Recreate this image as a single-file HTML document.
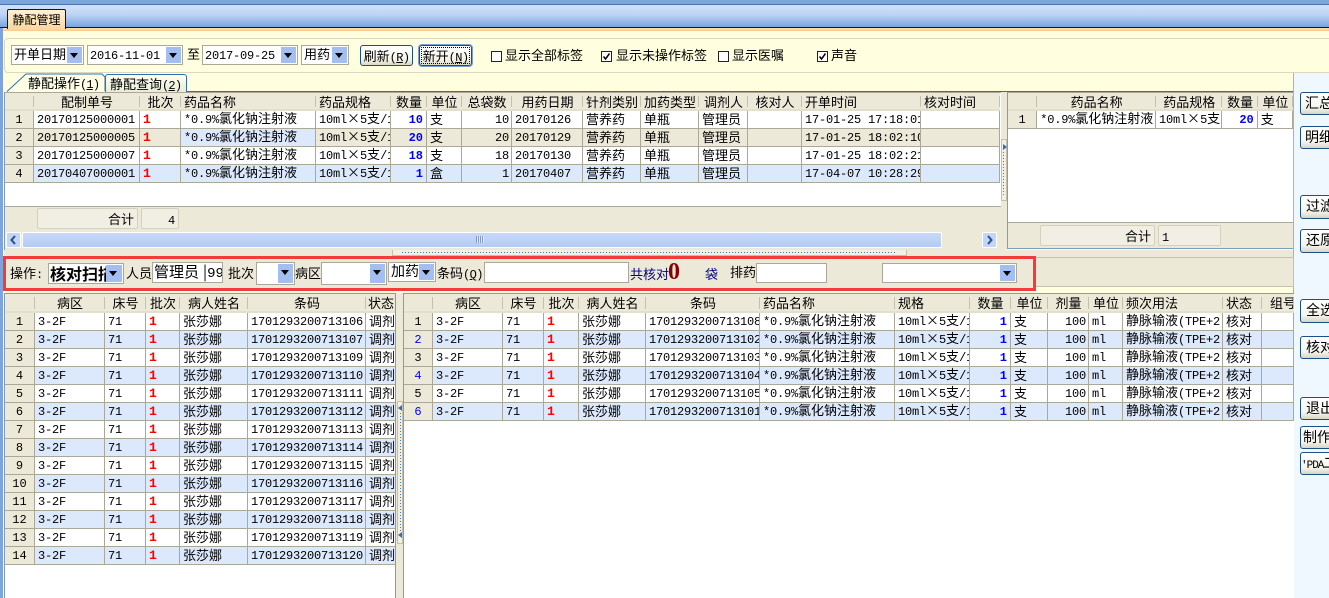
<!DOCTYPE html>
<html lang="zh"><head><meta charset="utf-8"><title>静配管理</title>
<style>
*{box-sizing:border-box}
html,body{margin:0;padding:0}
body{width:1329px;height:598px;overflow:hidden}
#p{position:relative;width:1329px;height:598px;overflow:hidden;background:#ffffe0;font:13px/18px "WenQuanYi Zen Hei","Noto Sans CJK SC",sans-serif;color:#000}
.a{position:absolute}
i{font-style:normal;font-family:"Liberation Mono",monospace;font-size:12px;letter-spacing:-.2px;line-height:1}
table{border-collapse:separate;border-spacing:0;table-layout:fixed;position:absolute;left:0;top:0}
td,th{height:18px;padding:0 0 2px 3px;white-space:nowrap;overflow:hidden;font-weight:normal;border-right:1px solid #aca899;border-bottom:1px solid #aca899;line-height:14px}
th{background:#ece9d8;border:0;position:relative;height:18px;box-shadow:inset 0 -2px 0 #e2dfcd;padding:0 3px}
th:after{content:"";position:absolute;right:0;top:3px;bottom:4px;width:1px;background:#c4c0ac}
th.l{text-align:left}
.t2 th{height:19px;padding-bottom:2px}
td.h{background:#ece9d8;text-align:center;padding:0;font-family:"Liberation Mono",monospace;font-size:12px}
td.hb{color:#00f}
td.n{font-family:"Liberation Mono",monospace;font-size:12px;letter-spacing:-.2px;padding:0 0 0 3px}
td.r{text-align:right;padding:0 2px 0 0;font-family:"Liberation Mono",monospace;font-size:12px;letter-spacing:-.2px}
td.q{text-align:right;padding:0 3px 0 0;color:#00f;font:bold 12px/14px "Liberation Mono",monospace}
td.b{color:#f00;font:bold 13px/14px "Liberation Mono",monospace;padding:0 0 0 3px}
tr.e td{background:#dce8fb}
tr.e td.h{background:#ece9d8}
tr.o td{background:#fff}
tr.o td.h{background:#ece9d8}
tr.s td{background:#ece9d8}
tr.s td.m{background:#dce8fb}
.g{overflow:hidden;background:#fff}
.c{position:absolute;background:#fff;border:1px solid #aca899;white-space:nowrap;overflow:hidden;padding-left:2px;line-height:16px}
.ar{position:absolute;right:1px;top:1px;bottom:1px;width:15px;background:#a3bff2}
.ar:after{content:"";position:absolute;left:3px;top:6px;border:4px solid transparent;border-top:5px solid #000;border-bottom:0}
.btn{position:absolute;background:linear-gradient(#fff,#f5f4ea 70%,#dcd8c4);border:1px solid #1d4f87;border-radius:3px;text-align:center;line-height:19px;overflow:hidden;white-space:nowrap}
.rb{position:absolute;left:1300px;width:40px;background:linear-gradient(#fff,#f6f5ee 70%,#d8d5c3);border:1px solid #1d4f87;border-radius:3px;padding-left:4px;font-size:14px;line-height:20px;white-space:nowrap;overflow:hidden}
.cb{position:absolute;width:11px;height:11px;background:#fff;border:1px solid #222;overflow:hidden}
.cb svg{position:absolute;left:0;top:0}
.fc{position:absolute;background:#f1efe4;border:1px solid #d4d0bd;border-radius:2px;height:21px;line-height:19px}
</style></head><body><div id="p">

<!-- title band -->
<div class="a" style="left:0;top:0;width:1329px;height:5px;background:#7ea4dd"></div>
<div class="a" style="left:0;top:4px;width:1329px;height:1px;background:#4a74ae"></div>
<div class="a" style="left:0;top:5px;width:1329px;height:22px;background:linear-gradient(#d3e3fa,#bcd3f4 45%,#7aa3de)"></div>
<div class="a" style="left:0;top:27px;width:1329px;height:1px;background:#00126f"></div>
<div class="a" style="left:0;top:28px;width:1329px;height:3px;background:linear-gradient(#ffe0a8,#f8c890)"></div>
<div class="a" style="left:7px;top:9px;width:59px;height:20px;background:linear-gradient(#fff2d4,#fbd79f);border:1px solid #00126f;border-bottom:0;border-radius:2px 2px 0 0;text-align:center;line-height:20px;font-size:12px">静配管理</div>
<div class="a" style="left:0;top:28px;width:3px;height:570px;background:#7ea4dd"></div>

<!-- toolbar -->
<div class="a" style="left:4px;top:38px;width:1340px;height:35px;border:1px solid #dad8c4;border-radius:4px"></div>
<div class="c" style="left:11px;top:45px;width:73px;height:20px">开单日期<div class="ar"></div></div>
<div class="c" style="left:87px;top:45px;width:96px;height:20px"><i>2016-11-01</i><div class="ar"></div></div>
<div class="a" style="left:187px;top:45px">至</div>
<div class="c" style="left:202px;top:45px;width:96px;height:20px"><i>2017-09-25</i><div class="ar"></div></div>
<div class="c" style="left:301px;top:45px;width:48px;height:20px">用药<div class="ar"></div></div>
<div class="btn" style="left:360px;top:45px;width:53px;height:21px">刷新<i style="letter-spacing:-.6px">(<u>R</u>)</i></div>
<div class="btn" style="left:419px;top:45px;width:53px;height:21px;outline:1px dotted #000;outline-offset:-3px;box-shadow:0 0 0 1px #7aa0d8">新开<i style="letter-spacing:-.6px">(<u>N</u>)</i></div>
<div class="cb" style="left:491px;top:51px"></div><div class="a" style="left:505px;top:46px">显示全部标签</div>
<div class="cb" style="left:601px;top:51px"><svg width="9" height="9"><path d="M1.5 4.5 L3.5 7 L7.5 1.5" fill="none" stroke="#000" stroke-width="1.5"/></svg></div><div class="a" style="left:616px;top:46px">显示未操作标签</div>
<div class="cb" style="left:718px;top:51px"></div><div class="a" style="left:732px;top:46px">显示医嘱</div>
<div class="cb" style="left:817px;top:51px"><svg width="9" height="9"><path d="M1.5 4.5 L3.5 7 L7.5 1.5" fill="none" stroke="#000" stroke-width="1.5"/></svg></div><div class="a" style="left:831px;top:46px">声音</div>

<!-- tabs -->
<svg class="a" style="left:4px;top:73px" width="110" height="20"><path d="M3 18.5 L22 1 H98 L101 4 V18" fill="#ffffe6" stroke="#2f6fae"/></svg>
<div class="a" style="left:28px;top:74px;line-height:18px">静配操作<i style="letter-spacing:-.8px">(<u>1</u>)</i></div>
<div class="a" style="left:105px;top:74px;width:82px;height:18px;background:linear-gradient(#fffff0,#e8ecd8);border:1px solid #2f6fae;border-bottom:0;border-radius:3px 3px 0 0;padding-left:4px;line-height:17px">静配查询<i style="letter-spacing:-.8px">(<u>2</u>)</i></div>
<div class="a" style="left:187px;top:91px;width:1107px;height:1px;background:#2f6fae"></div>

<!-- right column -->
<div class="a" style="left:1293px;top:73px;width:36px;height:525px;background:#eff7ff;border-left:1px solid #9fb4cf"></div>
<div class="rb" style="top:92px;height:23px">汇总</div>
<div class="rb" style="top:126px;height:23px">明细</div>
<div class="rb" style="top:195px;height:24px;padding-left:5px">过滤</div>
<div class="rb" style="top:229px;height:24px;padding-left:5px">还原</div>
<div class="rb" style="top:299px;height:24px;padding-left:5px">全选</div>
<div class="rb" style="top:336px;height:23px;padding-left:5px">核对</div>
<div class="rb" style="top:397px;height:23px;padding-left:5px">退出</div>
<div class="rb" style="top:426px;height:23px;padding-left:2px">制作</div>
<div class="rb" style="top:452px;height:23px;padding-left:0"><i style="font-size:11px;letter-spacing:-1px">'PDA</i>二</div>

<!-- top grid -->
<div class="a g" style="left:4px;top:92px;width:997px;height:158px;border-left:1px solid #7f9db9;border-top:1px solid #aca899">
<table style="width:995px">
<colgroup><col style="width:29px"><col style="width:106px"><col style="width:41px"><col style="width:135px"><col style="width:75px"><col style="width:36px"><col style="width:35px"><col style="width:50px"><col style="width:71px"><col style="width:58px"><col style="width:58px"><col style="width:49px"><col style="width:54px"><col style="width:119px"><col style="width:79px"></colgroup>
<tr><th></th><th>配制单号</th><th>批次</th><th class="l">药品名称</th><th class="l">药品规格</th><th>数量</th><th>单位</th><th>总袋数</th><th>用药日期</th><th>针剂类别</th><th>加药类型</th><th>调剂人</th><th>核对人</th><th class="l">开单时间</th><th class="l">核对时间</th></tr>
<tr class="o"><td class="h">1</td><td class="n">20170125000001</td><td class="b">1</td><td class="m"><i>*0.9%</i>氯化钠注射液</td><td><i>10ml</i>×<i>5</i>支<i>/1</i></td><td class="q">10</td><td>支</td><td class="r">10</td><td class="n">20170126</td><td>营养药</td><td>单瓶</td><td>管理员</td><td></td><td class="n">17-01-25 17:18:01</td><td></td></tr>
<tr class="s"><td class="h">2</td><td class="n">20170125000005</td><td class="b">1</td><td class="m"><i>*0.9%</i>氯化钠注射液</td><td><i>10ml</i>×<i>5</i>支<i>/1</i></td><td class="q">20</td><td>支</td><td class="r">20</td><td class="n">20170129</td><td>营养药</td><td>单瓶</td><td>管理员</td><td></td><td class="n">17-01-25 18:02:10</td><td></td></tr>
<tr class="o"><td class="h">3</td><td class="n">20170125000007</td><td class="b">1</td><td class="m"><i>*0.9%</i>氯化钠注射液</td><td><i>10ml</i>×<i>5</i>支<i>/1</i></td><td class="q">18</td><td>支</td><td class="r">18</td><td class="n">20170130</td><td>营养药</td><td>单瓶</td><td>管理员</td><td></td><td class="n">17-01-25 18:02:21</td><td></td></tr>
<tr class="e"><td class="h">4</td><td class="n">20170407000001</td><td class="b">1</td><td class="m"><i>*0.9%</i>氯化钠注射液</td><td><i>10ml</i>×<i>5</i>支<i>/1</i></td><td class="q">1</td><td>盒</td><td class="r">1</td><td class="n">20170407</td><td>营养药</td><td>单瓶</td><td>管理员</td><td></td><td class="n">17-04-07 10:28:29</td><td></td></tr>
</table>
<div class="a" style="left:0;top:113px;width:997px;height:44px;background:#ece9d8;border-top:1px solid #aca899"></div>
<div class="fc" style="left:32px;top:115px;width:101px;text-align:right;padding-right:3px">合计</div>
<div class="fc" style="left:136px;top:115px;width:38px;text-align:right;padding-right:3px"><i>4</i></div>
<div class="a" style="left:1px;top:139px;width:15px;height:16px;background:#c4d6f6;border:1px solid #fff"><svg width="13" height="14" style="position:absolute;left:0;top:0"><path d="M8 3 L4.5 7 L8 11" fill="none" stroke="#2a4f8f" stroke-width="2"/></svg></div>
<div class="a" style="left:17px;top:139px;width:920px;height:16px;background:linear-gradient(#c9d9f9,#b4caf4);border:1px solid #fff;border-radius:2px"></div>
<div class="a" style="left:471px;top:143px;width:8px;height:7px;background:repeating-linear-gradient(90deg,#7f9bd0 0 1px,#e4ecfb 1px 2px)"></div>
<div class="a" style="left:977px;top:139px;width:15px;height:16px;background:#c4d6f6;border:1px solid #fff"><svg width="13" height="14" style="position:absolute;left:0;top:0"><path d="M5 3 L8.5 7 L5 11" fill="none" stroke="#2a4f8f" stroke-width="2"/></svg></div>
</div>

<!-- vertical splitter top -->
<div class="a" style="left:1001px;top:92px;width:6px;height:158px;background:#ece9d8"></div>
<div class="a" style="left:1001px;top:139px;width:6px;height:62px;background:#f2f0e4;border:1px solid #c4c0ac"></div>
<div class="a" style="left:1003px;top:144px;width:0;height:0;border:3px solid transparent;border-left:4px solid #2a6fc8"></div>
<div class="a" style="left:1003px;top:152px;width:1px;height:44px;background:repeating-linear-gradient(#3a78c8 0 1px,transparent 1px 3px)"></div>

<!-- top right grid -->
<div class="a g" style="left:1007px;top:92px;width:286px;height:157px;border-top:1px solid #aca899;border-left:1px solid #7f9db9">
<table style="width:285px">
<colgroup><col style="width:29px"><col style="width:118px"><col style="width:66px"><col style="width:35px"><col style="width:35px"></colgroup>
<tr><th></th><th>药品名称</th><th>药品规格</th><th>数量</th><th>单位</th></tr>
<tr class="o"><td class="h">1</td><td><i>*0.9%</i>氯化钠注射液</td><td><i>10ml</i>×<i>5</i>支</td><td class="q">20</td><td>支</td></tr>
</table>
<div class="a" style="left:0;top:129px;width:285px;height:28px;background:#ece9d8;border-top:1px solid #aca899"></div>
<div class="fc" style="left:32px;top:132px;width:115px;text-align:right;padding-right:3px">合计</div>
<div class="fc" style="left:150px;top:132px;width:63px;padding-left:3px"><i>1</i></div>
</div>
<div class="a" style="left:1007px;top:248px;width:286px;height:1px;background:#7f9db9"></div>

<!-- horizontal splitter -->
<div class="a" style="left:4px;top:250px;width:1289px;height:7px;background:#ece9d8"></div>
<div class="a" style="left:392px;top:250px;width:515px;height:6px;background:#f2f0e4;border:1px solid #c4c0ac;border-top:0"></div>
<div class="a" style="left:402px;top:252px;width:495px;height:1px;background:repeating-linear-gradient(90deg,#3a78c8 0 1px,transparent 1px 3px)"></div>

<!-- operation panel -->
<div class="a" style="left:4px;top:257px;width:1290px;height:30px;background:#ece9d8;border:1px solid #c4c0ac"></div>
<div class="a" style="left:3px;top:256px;width:1033px;height:35px;background:#ece9d8;border:3px solid #f33b3b"></div>
<div class="a" style="left:10px;top:264px">操作<i>:</i></div>
<div class="c" style="left:48px;top:263px;width:76px;height:21px;font-size:16px;font-weight:bold;padding-left:1px;line-height:18px">核对扫描<div class="ar" style="width:16px"></div></div>
<div class="a" style="left:126px;top:264px">人员</div>
<div class="c" style="left:152px;top:262px;width:71px;height:21px;font-size:15px;line-height:18px;padding-left:1px">管理员<span style="margin-left:4px">|</span><i style="font-size:14px;letter-spacing:0">99</i></div>
<div class="a" style="left:228px;top:264px">批次</div>
<div class="c" style="left:256px;top:262px;width:39px;height:23px"><div class="ar"></div></div>
<div class="a" style="left:295px;top:264px">病区</div>
<div class="c" style="left:321px;top:262px;width:66px;height:23px"><div class="ar"></div></div>
<div class="c" style="left:388px;top:262px;width:48px;height:20px;font-size:14px">加药<div class="ar"></div></div>
<div class="a" style="left:437px;top:264px">条码<i style="letter-spacing:-.6px">(<u>Q</u>)</i></div>
<div class="c" style="left:484px;top:262px;width:145px;height:21px"></div>
<div class="a" style="left:630px;top:265px;color:#00007f">共核对</div>
<div class="a" style="left:668px;top:260px;color:#8b0000;font:bold 24px/24px 'Liberation Serif',serif">0</div>
<div class="a" style="left:705px;top:265px;color:#00007f">袋</div>
<div class="a" style="left:730px;top:263px">排药</div>
<div class="c" style="left:756px;top:263px;width:71px;height:20px"></div>
<div class="c" style="left:882px;top:263px;width:135px;height:20px"><div class="ar"></div></div>

<!-- bottom left grid -->
<div class="a g" style="left:4px;top:293px;width:392px;height:305px;border:1px solid #7f9db9;border-bottom:0">
<table class="t2" style="width:391px">
<colgroup><col style="width:30px"><col style="width:70px"><col style="width:41px"><col style="width:34px"><col style="width:68px"><col style="width:118px"><col style="width:30px"></colgroup>
<tr><th>&nbsp;</th><th>病区</th><th>床号</th><th>批次</th><th>病人姓名</th><th>条码</th><th class="l" style="padding:0 0 2px 2px">状态</th></tr>
<tr class="o"><td class="h">1</td><td class="n">3-2F</td><td class="n">71</td><td class="b">1</td><td>张莎娜</td><td class="n">1701293200713106</td><td>调剂</td></tr>
<tr class="e"><td class="h">2</td><td class="n">3-2F</td><td class="n">71</td><td class="b">1</td><td>张莎娜</td><td class="n">1701293200713107</td><td>调剂</td></tr>
<tr class="o"><td class="h">3</td><td class="n">3-2F</td><td class="n">71</td><td class="b">1</td><td>张莎娜</td><td class="n">1701293200713109</td><td>调剂</td></tr>
<tr class="e"><td class="h">4</td><td class="n">3-2F</td><td class="n">71</td><td class="b">1</td><td>张莎娜</td><td class="n">1701293200713110</td><td>调剂</td></tr>
<tr class="o"><td class="h">5</td><td class="n">3-2F</td><td class="n">71</td><td class="b">1</td><td>张莎娜</td><td class="n">1701293200713111</td><td>调剂</td></tr>
<tr class="e"><td class="h">6</td><td class="n">3-2F</td><td class="n">71</td><td class="b">1</td><td>张莎娜</td><td class="n">1701293200713112</td><td>调剂</td></tr>
<tr class="o"><td class="h">7</td><td class="n">3-2F</td><td class="n">71</td><td class="b">1</td><td>张莎娜</td><td class="n">1701293200713113</td><td>调剂</td></tr>
<tr class="e"><td class="h">8</td><td class="n">3-2F</td><td class="n">71</td><td class="b">1</td><td>张莎娜</td><td class="n">1701293200713114</td><td>调剂</td></tr>
<tr class="o"><td class="h">9</td><td class="n">3-2F</td><td class="n">71</td><td class="b">1</td><td>张莎娜</td><td class="n">1701293200713115</td><td>调剂</td></tr>
<tr class="e"><td class="h">10</td><td class="n">3-2F</td><td class="n">71</td><td class="b">1</td><td>张莎娜</td><td class="n">1701293200713116</td><td>调剂</td></tr>
<tr class="o"><td class="h">11</td><td class="n">3-2F</td><td class="n">71</td><td class="b">1</td><td>张莎娜</td><td class="n">1701293200713117</td><td>调剂</td></tr>
<tr class="e"><td class="h">12</td><td class="n">3-2F</td><td class="n">71</td><td class="b">1</td><td>张莎娜</td><td class="n">1701293200713118</td><td>调剂</td></tr>
<tr class="o"><td class="h">13</td><td class="n">3-2F</td><td class="n">71</td><td class="b">1</td><td>张莎娜</td><td class="n">1701293200713119</td><td>调剂</td></tr>
<tr class="e"><td class="h">14</td><td class="n">3-2F</td><td class="n">71</td><td class="b">1</td><td>张莎娜</td><td class="n">1701293200713120</td><td>调剂</td></tr>
</table>
</div>

<!-- vertical splitter bottom -->
<div class="a" style="left:396px;top:293px;width:7px;height:305px;background:#ece9d8"></div>
<div class="a" style="left:397px;top:401px;width:6px;height:143px;background:#f2f0e4;border:1px solid #c4c0ac"></div>
<div class="a" style="left:398px;top:405px;width:0;height:0;border:3px solid transparent;border-right:4px solid #2a6fc8;border-left:0"></div>
<div class="a" style="left:400px;top:413px;width:1px;height:118px;background:repeating-linear-gradient(#3a78c8 0 1px,transparent 1px 3px)"></div>
<div class="a" style="left:398px;top:532px;width:0;height:0;border:3px solid transparent;border-right:4px solid #2a6fc8;border-left:0"></div>

<!-- bottom right grid -->
<div class="a g" style="left:403px;top:293px;width:891px;height:305px;border-left:1px solid #7f9db9;border-top:1px solid #7f9db9">
<table class="t2" style="width:890px">
<colgroup><col style="width:29px"><col style="width:70px"><col style="width:41px"><col style="width:35px"><col style="width:67px"><col style="width:114px"><col style="width:135px"><col style="width:75px"><col style="width:41px"><col style="width:37px"><col style="width:41px"><col style="width:34px"><col style="width:100px"><col style="width:39px"><col style="width:32px"></colgroup>
<tr><th></th><th>病区</th><th>床号</th><th>批次</th><th>病人姓名</th><th>条码</th><th class="l">药品名称</th><th class="l">规格</th><th>数量</th><th>单位</th><th>剂量</th><th>单位</th><th class="l">频次用法</th><th class="l">状态</th><th class="l" style="padding-left:8px">组号</th></tr>
<tr class="o"><td class="h">1</td><td class="n">3-2F</td><td class="n">71</td><td class="b">1</td><td>张莎娜</td><td class="n">1701293200713108</td><td><i>*0.9%</i>氯化钠注射液</td><td><i>10ml</i>×<i>5</i>支<i>/1</i></td><td class="q">1</td><td>支</td><td class="r">100</td><td class="n">ml</td><td>静脉输液<i>(TPE+2</i></td><td>核对</td><td></td></tr>
<tr class="e"><td class="h hb">2</td><td class="n">3-2F</td><td class="n">71</td><td class="b">1</td><td>张莎娜</td><td class="n">1701293200713102</td><td><i>*0.9%</i>氯化钠注射液</td><td><i>10ml</i>×<i>5</i>支<i>/1</i></td><td class="q">1</td><td>支</td><td class="r">100</td><td class="n">ml</td><td>静脉输液<i>(TPE+2</i></td><td>核对</td><td></td></tr>
<tr class="o"><td class="h">3</td><td class="n">3-2F</td><td class="n">71</td><td class="b">1</td><td>张莎娜</td><td class="n">1701293200713103</td><td><i>*0.9%</i>氯化钠注射液</td><td><i>10ml</i>×<i>5</i>支<i>/1</i></td><td class="q">1</td><td>支</td><td class="r">100</td><td class="n">ml</td><td>静脉输液<i>(TPE+2</i></td><td>核对</td><td></td></tr>
<tr class="e"><td class="h hb">4</td><td class="n">3-2F</td><td class="n">71</td><td class="b">1</td><td>张莎娜</td><td class="n">1701293200713104</td><td><i>*0.9%</i>氯化钠注射液</td><td><i>10ml</i>×<i>5</i>支<i>/1</i></td><td class="q">1</td><td>支</td><td class="r">100</td><td class="n">ml</td><td>静脉输液<i>(TPE+2</i></td><td>核对</td><td></td></tr>
<tr class="o"><td class="h">5</td><td class="n">3-2F</td><td class="n">71</td><td class="b">1</td><td>张莎娜</td><td class="n">1701293200713105</td><td><i>*0.9%</i>氯化钠注射液</td><td><i>10ml</i>×<i>5</i>支<i>/1</i></td><td class="q">1</td><td>支</td><td class="r">100</td><td class="n">ml</td><td>静脉输液<i>(TPE+2</i></td><td>核对</td><td></td></tr>
<tr class="e"><td class="h hb">6</td><td class="n">3-2F</td><td class="n">71</td><td class="b">1</td><td>张莎娜</td><td class="n">1701293200713101</td><td><i>*0.9%</i>氯化钠注射液</td><td><i>10ml</i>×<i>5</i>支<i>/1</i></td><td class="q">1</td><td>支</td><td class="r">100</td><td class="n">ml</td><td>静脉输液<i>(TPE+2</i></td><td>核对</td><td></td></tr>
</table>
</div>

</div></body></html>
